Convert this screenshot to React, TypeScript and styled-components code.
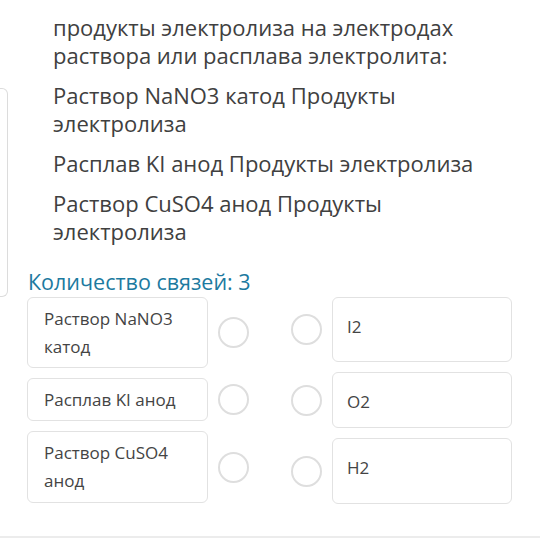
import styled, { createGlobalStyle } from "styled-components";

const GlobalStyle = createGlobalStyle`
  body {
    margin: 0;
    background: #ffffff;
    font-family: "Open Sans", "Noto Sans", sans-serif;
    color: #3f3f3f;
  }
`;

const Page = styled.div`
  width: 540px;
  height: 540px;
  overflow: hidden;
  display: flex;
  flex-direction: column;
`;

const Top = styled.div`
  display: flex;
`;

// край соседней карточки слева
const Stub = styled.div`
  width: 7px;
  height: 207px;
  margin-top: 88px;
  flex-shrink: 0;
  border: 1px solid #dcdcdc;
  border-left: none;
  border-radius: 0 6px 6px 0;
`;

const Content = styled.div`
  padding-top: 13px;
  display: flex;
  flex-direction: column;
`;

const Question = styled.div`
  padding-left: 45px;
  width: 430px;
`;

const Para = styled.p`
  margin: 0 0 12px;
  font-size: 22px;
  line-height: 28px;
  color: #404040;
`;

const Heading = styled.div`
  margin-top: 11px;
  padding-left: 20px;
  font-size: 21.5px;
  line-height: 28px;
  color: #1c7aa0;
`;

const Matching = styled.div`
  display: flex;
  justify-content: space-between;
  padding: 0 28px 0 27px;
`;

const Column = styled.div`
  display: flex;
  flex-direction: column;
  gap: 10px;
`;

const Item = styled.div<{ $right?: boolean }>`
  display: flex;
  align-items: center;
  gap: 10px;
  flex-direction: ${(p) => (p.$right ? "row-reverse" : "row")};
`;

const Card = styled.div<{ $right?: boolean; $h?: number }>`
  box-sizing: border-box;
  width: ${(p) => (p.$right ? 180 : 181)}px;
  height: ${(p) => (p.$h ? `${p.$h}px` : "auto")};
  padding: ${(p) => (p.$right ? "15px 14px" : "7px 14px 7px 16px")};
  border: 1px solid #e2e2e2;
  border-radius: 6px;
  font-size: 17px;
  line-height: 28px;
  color: #444444;
`;

const Dot = styled.div`
  box-sizing: border-box;
  width: 31px;
  height: 31px;
  border-radius: 50%;
  border: 2px solid #dedede;
  flex-shrink: 0;
`;

const Bottom = styled.div`
  margin-top: auto;
  margin-bottom: 2px;
  height: 2px;
  background: #ececec;
`;

const left = [
  { text: "Раствор NaNO3 катод", h: 71 },
  { text: "Расплав KI анод", h: 43 },
  { text: "Раствор CuSO4 анод", h: 72 },
];

const right = [
  { text: "I2", h: 65 },
  { text: "O2", h: 56 },
  { text: "H2", h: 66 },
];

export default function App() {
  return (
    <Page>
      <GlobalStyle />
      <Top>
        <Stub />
        <Content>
          <Question>
            <Para>продукты электролиза на электродах раствора или расплава электролита:</Para>
            <Para>Раствор NaNO3 катод Продукты электролиза</Para>
            <Para>Расплав KI анод Продукты электролиза</Para>
            <Para>Раствор CuSO4 анод Продукты электролиза</Para>
          </Question>
          <Heading>Количество связей: 3</Heading>
        </Content>
      </Top>
      <Matching>
        <Column>
          {left.map((c) => (
            <Item key={c.text}>
              <Card $h={c.h}>{c.text}</Card>
              <Dot />
            </Item>
          ))}
        </Column>
        <Column>
          {right.map((c) => (
            <Item key={c.text} $right>
              <Card $right $h={c.h}>{c.text}</Card>
              <Dot />
            </Item>
          ))}
        </Column>
      </Matching>
      <Bottom />
    </Page>
  );
}
